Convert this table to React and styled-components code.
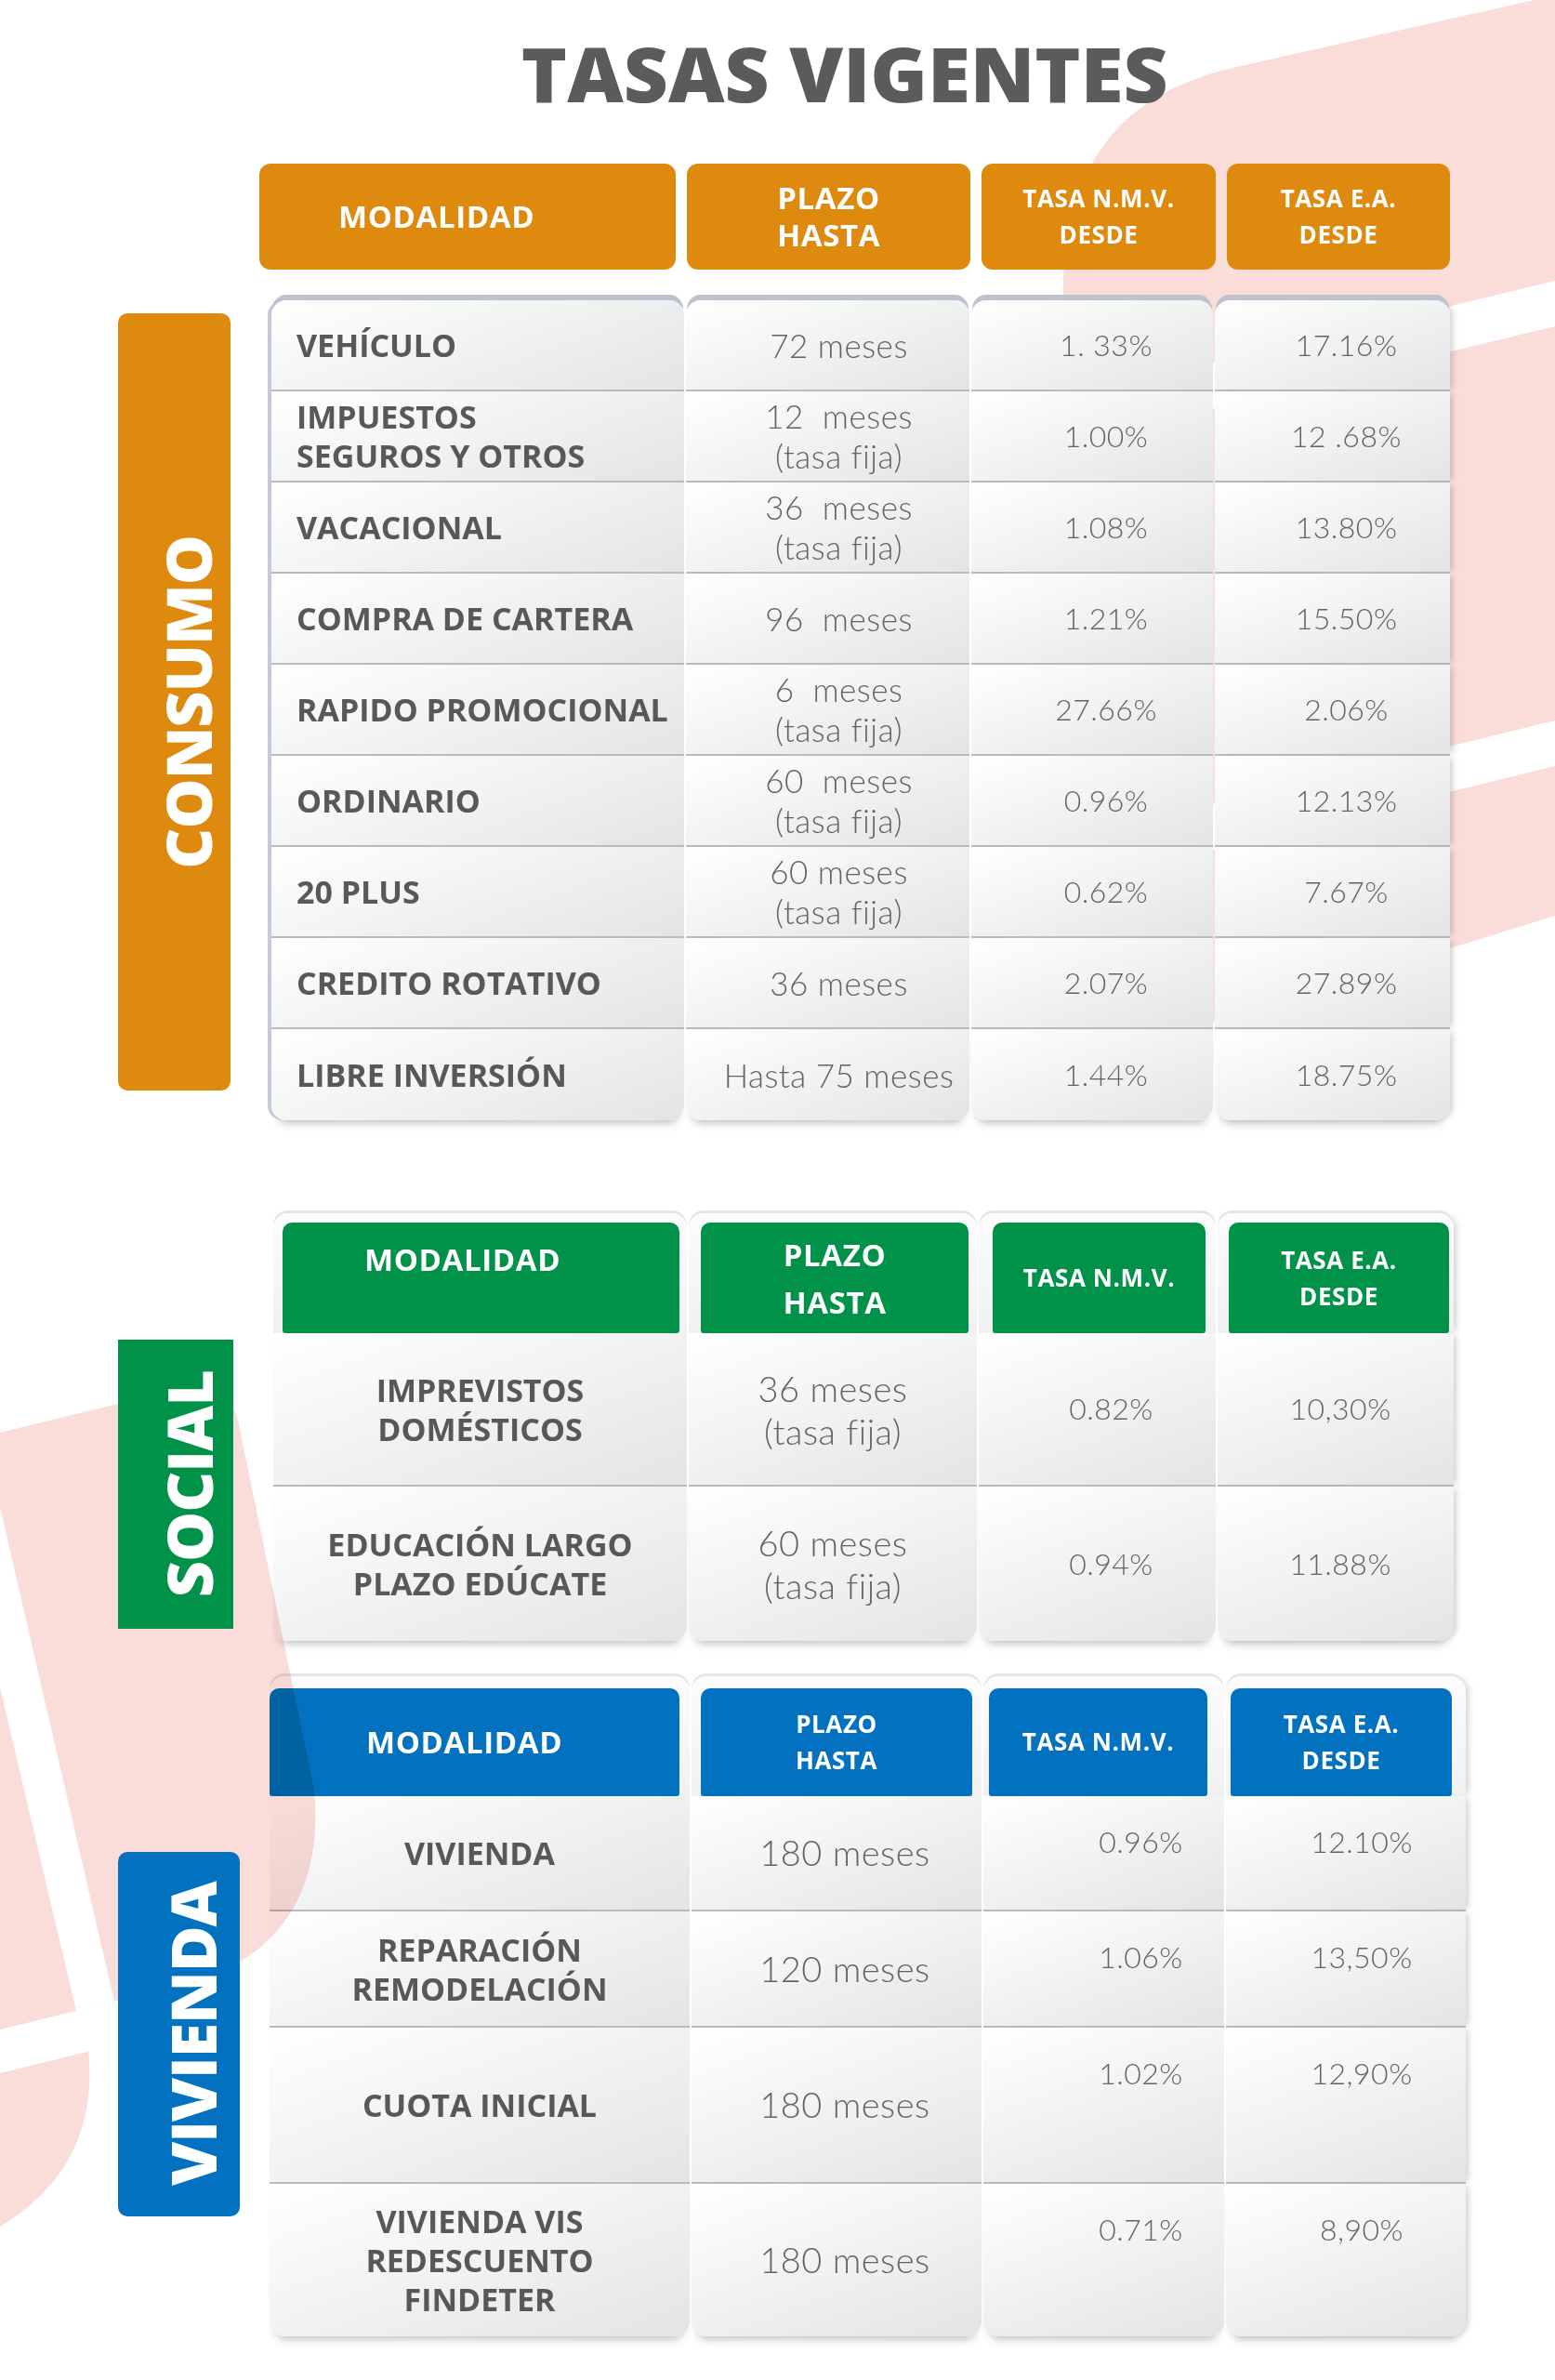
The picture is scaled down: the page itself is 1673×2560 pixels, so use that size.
import React from "react";
import styled, { createGlobalStyle, css } from "styled-components";

const ORANGE = "#dd8a0f";
const GREEN = "#01924a";
const BLUE = "#0171c0";
const PINK = "#fadcd8";

const GlobalStyle = createGlobalStyle`
  html, body {
    margin: 0;
    padding: 0;
    background: #ffffff;
  }
  body {
    font-family: "Open Sans", "Liberation Sans", sans-serif;
  }
`;

// Datos
const consumoHeads = [
  { lines: ["MODALIDAD"], w: 448, size: 33, left: 85 },
  { lines: ["PLAZO", "HASTA"], w: 305, size: 33, lh: 40 },
  { lines: ["TASA N.M.V.", "DESDE"], w: 252, size: 26, lh: 39 },
  { lines: ["TASA E.A.", "DESDE"], w: 240, size: 26, lh: 39 },
];

const consumoCols = [
  { align: "left", pad: "0 0 0 27px", label: true, lip: true },
  { pad: "0 0 0 24px", size: 35, lh: 43 },
  { pad: "0 0 0 30px", size: 32 },
  { pad: "0 0 0 30px", size: 32, edge: true },
];

const consumoRows = [
  [["VEHÍCULO"], ["72 meses"], ["1. 33%"], ["17.16%"]],
  [["IMPUESTOS", "SEGUROS Y OTROS"], ["12  meses", "(tasa fija)"], ["1.00%"], ["12 .68%"]],
  [["VACACIONAL"], ["36  meses", "(tasa fija)"], ["1.08%"], ["13.80%"]],
  [["COMPRA DE CARTERA"], ["96  meses"], ["1.21%"], ["15.50%"]],
  [["RAPIDO PROMOCIONAL"], ["6  meses", "(tasa fija)"], ["27.66%"], ["2.06%"]],
  [["ORDINARIO"], ["60  meses", "(tasa fija)"], ["0.96%"], ["12.13%"]],
  [["20 PLUS"], ["60 meses", "(tasa fija)"], ["0.62%"], ["7.67%"]],
  [["CREDITO ROTATIVO"], ["36 meses"], ["2.07%"], ["27.89%"]],
  [["LIBRE INVERSIÓN"], ["Hasta 75 meses"], ["1.44%"], ["18.75%"]],
];

const socialHeads = [
  { lines: ["MODALIDAD"], size: 33, inset: "10px 8px 0 10px", valign: "top", padTop: 20, left: 88 },
  { lines: ["PLAZO", "HASTA"], size: 33, lh: 51, inset: "10px 9px 0 13px" },
  { lines: ["TASA N.M.V."], size: 26, inset: "10px 11px 0 15px" },
  { lines: ["TASA E.A.", "DESDE"], size: 26, lh: 39, inset: "10px 5px 0 12px" },
];

const socialCols = [
  { label: true },
  { size: 38, lh: 46 },
  { pad: "0 0 0 30px", size: 32 },
  { pad: "0 0 0 10px", size: 32, edge: true },
];

const socialRows = [
  [["IMPREVISTOS", "DOMÉSTICOS"], ["36 meses", "(tasa fija)"], ["0.82%"], ["10,30%"]],
  [["EDUCACIÓN LARGO", "PLAZO EDÚCATE"], ["60 meses", "(tasa fija)"], ["0.94%"], ["11.88%"]],
];

const viviendaHeads = [
  { lines: ["MODALIDAD"], size: 33, inset: "13px 11px 0 0", left: 104 },
  { lines: ["PLAZO", "HASTA"], size: 26, lh: 39, inset: "13px 10px 0 10px" },
  { lines: ["TASA N.M.V."], size: 26, inset: "13px 18px 0 6px" },
  { lines: ["TASA E.A.", "DESDE"], size: 26, lh: 39, inset: "13px 15px 0 5px" },
];

const viviendaCols = [
  { label: true },
  { pad: "0 0 0 18px", size: 38 },
  { pad: "30px 0 0 80px", size: 32, valign: "top" },
  { pad: "30px 0 0 34px", size: 32, valign: "top", edge: true },
];

const viviendaRows = [
  [["VIVIENDA"], ["180 meses"], ["0.96%"], ["12.10%"]],
  [["REPARACIÓN", "REMODELACIÓN"], ["120 meses"], ["1.06%"], ["13,50%"]],
  [["CUOTA INICIAL"], ["180 meses"], ["1.02%"], ["12,90%"]],
  [["VIVIENDA VIS", "REDESCUENTO", "FINDETER"], ["180 meses"], ["0.71%"], ["8,90%"]],
];

const Lines = ({ lines }) =>
  lines.map((l, i) => (
    <React.Fragment key={i}>
      {i > 0 && <br />}
      {l}
    </React.Fragment>
  ));

const BodyCells = ({ rows, cols, roundTop }) =>
  rows.map((row, r) =>
    row.map((content, c) => {
      const col = cols[c];
      return (
        <Cell
          key={`${r}-${c}`}
          $align={col.align || "center"}
          $valign={col.valign}
          $pad={col.pad}
          $first={roundTop && r === 0}
          $last={r === rows.length - 1}
          $lip={col.lip}
          $edge={col.edge}
        >
          {col.label ? (
            <Label>
              <Lines lines={content} />
            </Label>
          ) : (
            <Value $size={col.size} $lh={col.lh}>
              <Lines lines={content} />
            </Value>
          )}
        </Cell>
      );
    })
  );

const InsetTable = ({ heads, cols, rows, widths, heights, color }) => (
  <Grid $cols={widths} $rows={heights}>
    {heads.map((h, i) => (
      <HeadSlot key={i} $inset={h.inset} $edge={i === heads.length - 1}>
        <HeadBox $bg={color} $valign={h.valign} $padTop={h.padTop} $left={h.left}>
          <HeadText $size={h.size} $lh={h.lh}>
            <Lines lines={h.lines} />
          </HeadText>
        </HeadBox>
      </HeadSlot>
    ))}
    <BodyCells rows={rows} cols={cols} />
  </Grid>
);

export default function App() {
  return (
    <>
      <GlobalStyle />
      <Page>
        <Decor $z={0} viewBox="0 0 1673 2560" width="1673" height="2560">
          <path
            d="M1673 -5 L1330 72 C1215 98 1150 165 1144 300 L1142 1150 L1673 985 Z"
            fill={PINK}
          />
          <polygon points="1100,440 1673,302 1673,351 1100,489" fill="#fff" />
          <polygon points="1100,915 1673,775 1673,824 1100,964" fill="#fff" />
        </Decor>
        <Decor $z={2} $blend viewBox="0 0 1673 2560" width="1673" height="2560">
          <path
            d="M0 1541 L200 1492 Q245 1481 256 1528 L338 1925 Q350 2060 250 2115 L95 2205 Q108 2330 0 2395 Z"
            fill={PINK}
          />
          <polygon points="0,1621 123,2153 82,2163 0,1815" fill="#fff" />
          <polygon points="0,2183 400,2085 400,2132 0,2230" fill="#fff" />
        </Decor>

        <Title>
          <span>TASAS VIGENTES</span>
        </Title>

        {/* Consumo */}
        <Section $mt="57px">
          <SideLabel $bg={ORANGE} $w="121px" $h="836px" $mt="161px" $r="10px">
            <span>CONSUMO</span>
          </SideLabel>
          <TableWrap $ml="31px">
            <HeadRow>
              {consumoHeads.map((h, i) => (
                <FloatHead key={i} $w={h.w} $left={h.left}>
                  <HeadText $size={h.size} $lh={h.lh}>
                    <Lines lines={h.lines} />
                  </HeadText>
                </FloatHead>
              ))}
            </HeadRow>
            <Grid
              $cols="444px 305px 260px 253px"
              $rows="repeat(9, 98px)"
              $margin="33px 0 0 13px"
            >
              <BodyCells rows={consumoRows} cols={consumoCols} roundTop />
            </Grid>
          </TableWrap>
        </Section>

        {/* Social */}
        <Section $mt="100px">
          <SideLabel $bg={GREEN} $w="124px" $h="311px" $mt="136px" $r="0">
            <span>SOCIAL</span>
          </SideLabel>
          <TableWrap $ml="43px">
            <InsetTable
              heads={socialHeads}
              cols={socialCols}
              rows={socialRows}
              widths="445px 310px 255px 254px"
              heights="129px 165px 166px"
              color={GREEN}
            />
          </TableWrap>
        </Section>

        {/* Vivienda */}
        <Section $mt="38px">
          <SideLabel $bg={BLUE} $w="131px" $h="392px" $mt="189px" $r="10px">
            <span>VIVIENDA</span>
          </SideLabel>
          <TableWrap $ml="32px">
            <InsetTable
              heads={viviendaHeads}
              cols={viviendaCols}
              rows={viviendaRows}
              widths="452px 312px 259px 258px"
              heights="129px 124px 125px 168px 164px"
              color={BLUE}
            />
          </TableWrap>
        </Section>
      </Page>
    </>
  );
}

// Estilos
const Page = styled.div`
  position: relative;
  isolation: isolate;
  width: 1673px;
  min-height: 2560px;
  padding-top: 38px;
  box-sizing: border-box;
  overflow: hidden;
  background: #ffffff;
`;

const Decor = styled.svg`
  position: absolute;
  top: 0;
  left: 0;
  z-index: ${(p) => p.$z};
  pointer-events: none;
  ${(p) => p.$blend && "mix-blend-mode: multiply;"}
`;

const Title = styled.h1`
  position: relative;
  z-index: 1;
  margin: 0;
  padding-left: 145px;
  text-align: center;
  font-family: "Open Sans", "Liberation Sans", sans-serif;
  font-weight: 800;
  font-size: 81px;
  line-height: 1;
  color: #5b5b5b;

  span {
    display: inline-block;
    transform: scaleX(1.03);
  }
`;

const Section = styled.section`
  display: flex;
  align-items: flex-start;
  margin-top: ${(p) => p.$mt};
  padding-left: 127px;
`;

const SideLabel = styled.div`
  position: relative;
  z-index: 3;
  flex: none;
  width: ${(p) => p.$w};
  height: ${(p) => p.$h};
  margin-top: ${(p) => p.$mt};
  border-radius: ${(p) => p.$r};
  background: ${(p) => p.$bg};
  display: flex;
  align-items: center;
  justify-content: center;
  padding-left: 28px;
  box-sizing: border-box;

  span {
    writing-mode: vertical-rl;
    transform: rotate(180deg);
    font-family: "Open Sans", "Liberation Sans", sans-serif;
    font-weight: 800;
    font-size: 68px;
    line-height: 1;
    letter-spacing: -1px;
    color: #ffffff;
    white-space: nowrap;
  }
`;

const TableWrap = styled.div`
  position: relative;
  z-index: 1;
  margin-left: ${(p) => p.$ml};
`;

const HeadRow = styled.div`
  display: flex;
  gap: 12px;
`;

const FloatHead = styled.div`
  width: ${(p) => p.$w}px;
  height: 114px;
  border-radius: 12px;
  background: ${ORANGE};
  display: flex;
  align-items: center;
  justify-content: ${(p) => (p.$left ? "flex-start" : "center")};
  padding-left: ${(p) => (p.$left ? `${p.$left}px` : "0")};
  box-sizing: border-box;
  text-align: center;
`;

const HeadText = styled.div`
  font-family: "Open Sans", "Liberation Sans", sans-serif;
  font-weight: 700;
  font-size: ${(p) => p.$size}px;
  line-height: ${(p) => (p.$lh ? `${p.$lh}px` : 1.2)};
  letter-spacing: 0.6px;
  color: #ffffff;
`;

const Grid = styled.div`
  display: grid;
  grid-template-columns: ${(p) => p.$cols};
  grid-template-rows: ${(p) => p.$rows};
  column-gap: 2px;
  margin: ${(p) => p.$margin || "0"};
`;

const HeadSlot = styled.div`
  display: flex;
  padding: ${(p) => p.$inset};
  box-sizing: border-box;
  background: linear-gradient(180deg, #fcfcfc 0%, #f1f1f2 100%);
  border-top-left-radius: 16px;
  border-top-right-radius: 16px;
  box-shadow: 0 -3px 0 0 #e4e5e8
    ${(p) => (p.$edge ? ", 6px 0 6px -3px rgba(80, 80, 90, 0.25)" : "")};
`;

const HeadBox = styled.div`
  flex: 1;
  display: flex;
  align-items: ${(p) => (p.$valign === "top" ? "flex-start" : "center")};
  justify-content: ${(p) => (p.$left ? "flex-start" : "center")};
  padding-top: ${(p) => (p.$padTop ? `${p.$padTop}px` : "0")};
  padding-left: ${(p) => (p.$left ? `${p.$left}px` : "0")};
  background: ${(p) => p.$bg};
  border-radius: 10px 10px 3px 3px;
  text-align: center;
`;

const cellShadow = ({ $first, $last, $lip, $edge }) => {
  const s = [];
  if ($first) s.push("0 -7px 0 -1px #bdc2cc");
  if ($lip) s.push("-4px 0 0 0 #c6cad2");
  if ($edge) s.push("6px 0 6px -3px rgba(80, 80, 90, 0.25)");
  if ($last) s.push("0 10px 10px -7px rgba(70, 70, 80, 0.35)");
  return s.length ? s.join(", ") : "none";
};

const Cell = styled.div`
  display: flex;
  flex-direction: column;
  justify-content: ${(p) => (p.$valign === "top" ? "flex-start" : "center")};
  align-items: ${(p) => (p.$align === "left" ? "flex-start" : "center")};
  text-align: ${(p) => p.$align};
  padding: ${(p) => p.$pad || "0"};
  box-sizing: border-box;
  background: linear-gradient(160deg, #ffffff 0%, #f4f5f5 38%, #e3e4e5 100%);
  border-bottom: ${(p) => (p.$last ? "0" : "2px solid #b9babd")};
  box-shadow: ${cellShadow};

  ${(p) =>
    p.$first &&
    css`
      border-top-left-radius: 16px;
      border-top-right-radius: 16px;
    `}
  ${(p) =>
    p.$last &&
    css`
      border-bottom-left-radius: 16px;
      border-bottom-right-radius: 16px;
    `}
`;

const Label = styled.div`
  font-family: "Open Sans", "Liberation Sans", sans-serif;
  font-weight: 700;
  font-size: 34px;
  line-height: 42px;
  letter-spacing: 0;
  color: #585858;
`;

const Value = styled.div`
  font-family: Lato, "Open Sans", sans-serif;
  font-weight: 300;
  font-size: ${(p) => p.$size}px;
  line-height: ${(p) => (p.$lh ? `${p.$lh}px` : 1.2)};
  letter-spacing: 0.5px;
  color: #636363;
  white-space: pre;
`;
